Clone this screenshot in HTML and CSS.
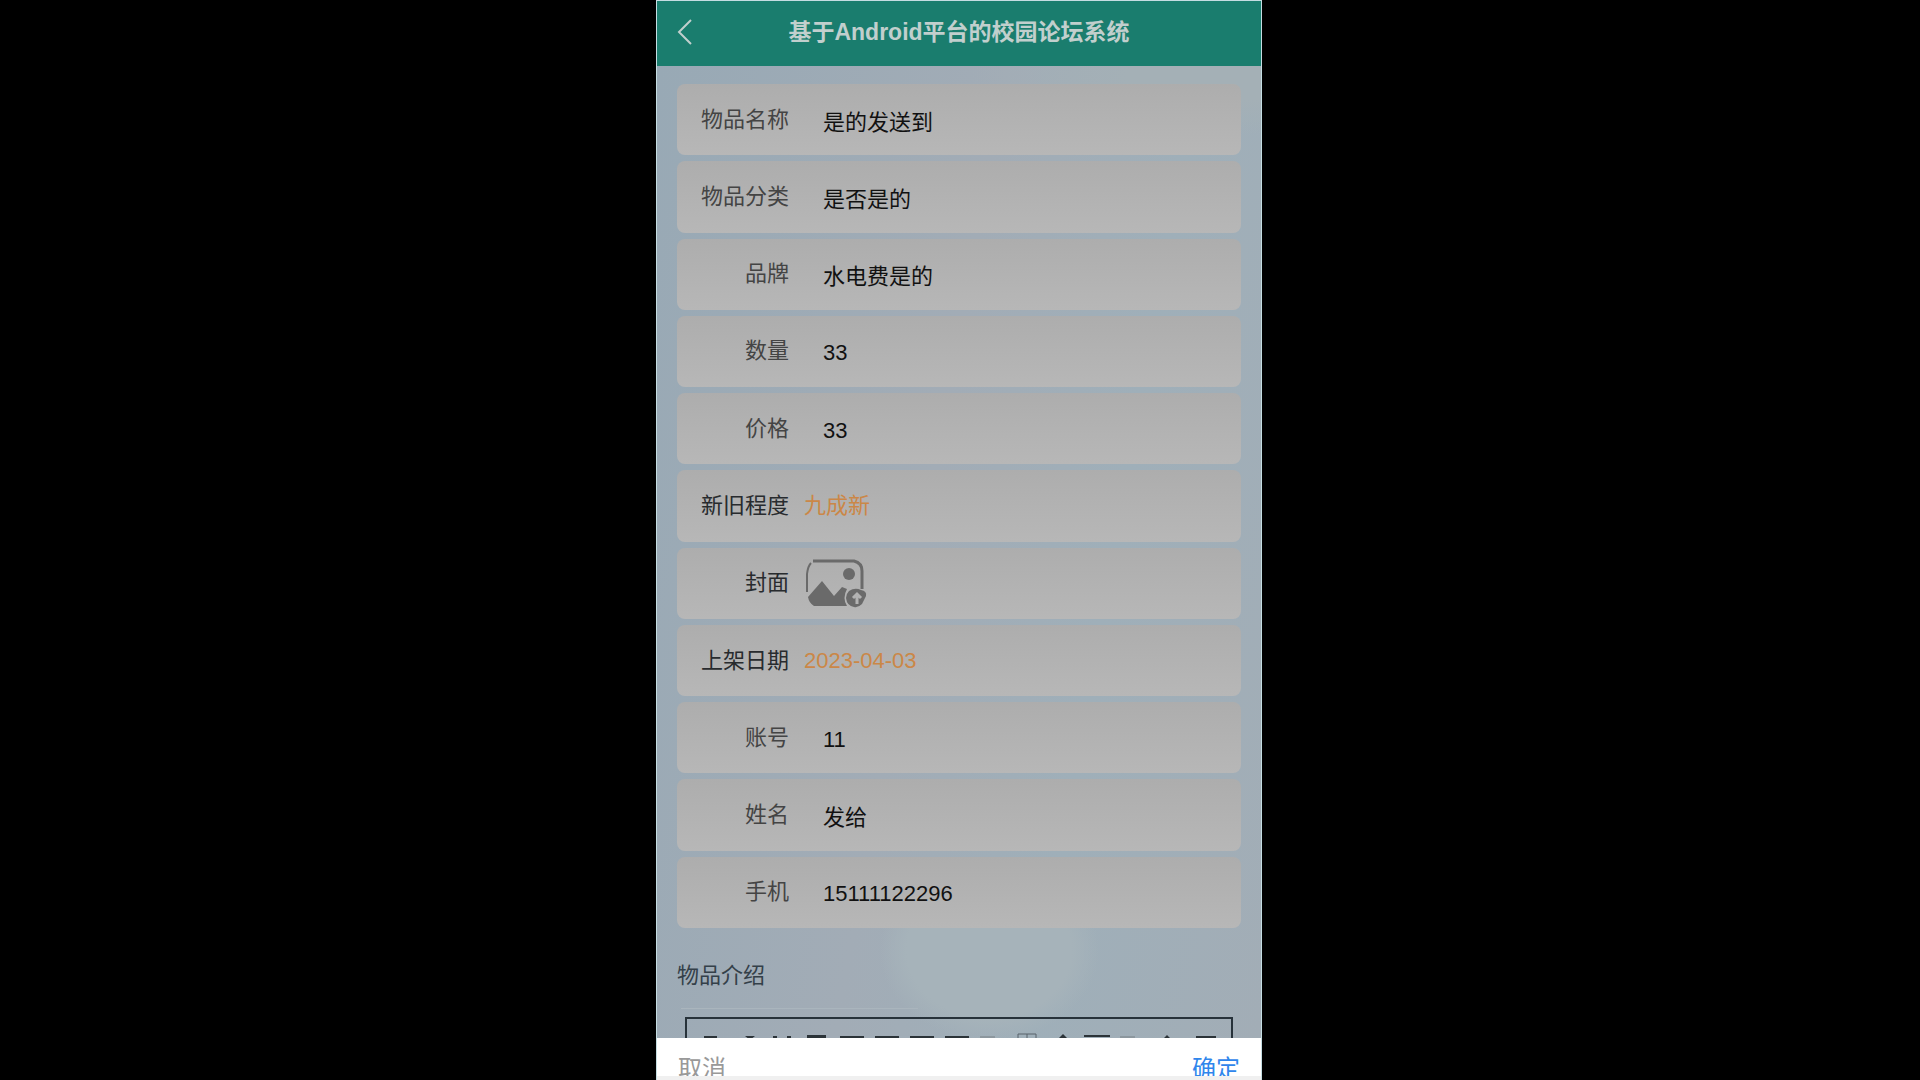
FILE: index.html
```html
<!DOCTYPE html>
<html lang="zh-CN">
<head>
<meta charset="utf-8">
<meta name="viewport" content="width=device-width, initial-scale=1">
<title>基于Android平台的校园论坛系统</title>
<link rel="stylesheet" href="styles.css">
</head>
<body>
<div class="phone">
  <header class="bar">
    <button class="back" type="button" aria-label="返回">
      <svg width="16" height="26" viewBox="0 0 16 26" fill="none" stroke="currentColor" stroke-width="2"><path d="M14 1 2 13l12 12"/></svg>
    </button>
    <h1 class="title">基于Android平台的校园论坛系统</h1>
  </header>
  <main class="content">
    <form class="form">
      <div class="row"><label class="label" for="name">物品名称</label><input class="input" id="name" value="是的发送到"></div>
      <div class="row"><label class="label" for="category">物品分类</label><input class="input" id="category" value="是否是的"></div>
      <div class="row"><label class="label" for="brand">品牌</label><input class="input" id="brand" value="水电费是的"></div>
      <div class="row"><label class="label" for="count">数量</label><input class="input digits" id="count" value="33"></div>
      <div class="row"><label class="label" for="price">价格</label><input class="input digits" id="price" value="33"></div>
      <div class="row"><label class="label dark" for="condition">新旧程度</label><button class="picker" id="condition" type="button">九成新</button></div>
      <div class="row"><label class="label dark" for="cover">封面</label>
        <button class="picker" id="cover" type="button" aria-label="上传封面">
          <svg class="upload" width="64" height="50" viewBox="0 0 64 50">
            <path d="M3 34V16Q4 8 7 5" fill="none" stroke="currentColor" stroke-width="2"/>
            <path d="M9 3h41q8 2 8 10v18" fill="none" stroke="currentColor" stroke-width="3"/>
            <circle cx="45" cy="16" r="6" fill="currentColor"/>
            <path d="M4 39 18 23l12 15 8-9 5 2q-5 9 0 17H10Q5 45 4 39Z" fill="currentColor"/>
            <path d="M45 33q6-4 12-1 6 1 5 6l-4 8q-4 4-8 3-7-1-8-9 0-4 3-7Z" fill="currentColor"/>
            <path d="M53 46V37M49 40l4-4 4 4" fill="none" stroke="#b3b3b3" stroke-width="3"/>
          </svg>
        </button></div>
      <div class="row"><label class="label dark" for="date">上架日期</label><button class="picker" id="date" type="button">2023-04-03</button></div>
      <div class="row"><label class="label" for="account">账号</label><input class="input digits" id="account" value="11"></div>
      <div class="row"><label class="label" for="person">姓名</label><input class="input" id="person" value="发给"></div>
      <div class="row"><label class="label" for="mobile">手机</label><input class="input digits" id="mobile" value="15111122296"></div>
    </form>
    <h2 class="section">物品介绍</h2>
    <div class="editor">
      <svg class="tools" width="512" height="20" viewBox="0 0 512 20" fill="none" stroke="#2b3338" stroke-width="2">
        <path d="M0 4h13M136 4h24M171 4h24M206 4h24M241 4h24M492 4h20M103 4h19M380 3h26"/>
        <path d="M103 3h19"/>
        <path d="M276 4h15M416 4h15" stroke="#8c979e"/>
        <path d="M314 6V1h18v5M323 1v5" stroke="#59636a" stroke-width="1"/>
        <path d="M41 3h10l-5 4ZM69 3h4v3h-4ZM83 3h4v3h-4ZM355 5l4-4 4 4ZM460 5l3-3 3 3Z" fill="#2b3338" stroke="none"/>
      </svg>
    </div>
  </main>
  <footer class="actions">
    <button class="action cancel" type="button">取消</button>
    <button class="action ok" type="button">确定</button>
  </footer>
</div>
</body>
</html>
```
FILE: styles.css
```css
* { box-sizing: border-box; }
body {
  margin: 0;
  padding-right: 2px;
  background: #000;
  font-family: "Liberation Sans", "Noto Sans CJK SC", sans-serif;
  font-size: 22px;
}
button, input {
  margin: 0;
  padding: 0;
  border: 0;
  background: none;
  font: inherit;
  color: inherit;
}
.phone {
  display: flex;
  flex-direction: column;
  width: 100%;
  max-width: 606px;
  height: 100vh;
  margin: 0 auto;
  overflow: hidden;
  border: solid #c5dde2;
  border-width: 1px 1px 0;
}
.bar {
  display: grid;
  grid-template-columns: 80px 1fr 80px;
  align-items: center;
  flex: none;
  height: 65px;
  padding-bottom: 3px;
  background: #1a7d6e;
  color: #c1cfcd;
}
.back {
  display: flex;
  padding: 0 20px;
}
.title {
  margin: 0;
  font-size: 23px;
  font-weight: 700;
  line-height: 32px;
  text-align: center;
}
.content {
  flex: 1;
  min-height: 0;
  overflow: hidden;
  padding: 18px 20px 0;
  background:
    radial-gradient(ellipse 110px 90px at 55% 91%, #a6b3ba 75%, transparent 100%),
    radial-gradient(ellipse 260px 60px at 95% 1%, #a4b0b6 40%, transparent 100%),
    linear-gradient(100deg, #98a9b5, #a2acb6 45%, #9fafb9 70%, #a2adb6);
}
.form {
  display: grid;
  grid-auto-rows: 1fr;
  gap: 6px;
  min-height: 844px;
}
.row {
  display: grid;
  grid-template-columns: 92px 1fr;
  gap: 15px;
  align-items: center;
  padding: 0 20px;
  border-radius: 8px;
  background: linear-gradient(#adadad, #b7b7b7);
}
.label {
  color: #444;
  line-height: 32px;
  text-align: right;
  white-space: nowrap;
}
.label.dark { color: #282b2e; }
.input {
  width: 100%;
  height: 36px;
  padding: 0 19px;
  color: #111;
  font-family: "Noto Sans CJK SC", sans-serif;
  line-height: 32px;
  outline: 0;
}
.input.digits {
  padding-top: 4px;
  font-family: "Liberation Sans", sans-serif;
}
.picker {
  display: flex;
  align-items: center;
  color: #cb8747;
  line-height: 32px;
}
.upload { color: #6a6a6a; }
.section {
  margin: 30px 0 0;
  color: #344049;
  font-size: 22px;
  font-weight: 400;
  line-height: 36px;
}
.section::after {
  content: "";
  display: block;
  width: 42%;
  height: 1px;
  margin: 14px 0 0 4px;
  background: #aab5bd;
}
.editor {
  height: 200px;
  margin: 8px 8px 0;
  padding: 14px 17px;
  border: 2px solid #27323a;
}
.actions {
  display: flex;
  justify-content: space-between;
  flex: none;
  height: 42px;
  overflow: hidden;
  padding: 13px 21px 0;
  border-bottom: 4px solid #f0f0f0;
  background: #fff;
}
.action {
  height: 36px;
  font-size: 24px;
  line-height: 36px;
}
.cancel { color: #999; }
.ok { color: #2f86ec; }
```
